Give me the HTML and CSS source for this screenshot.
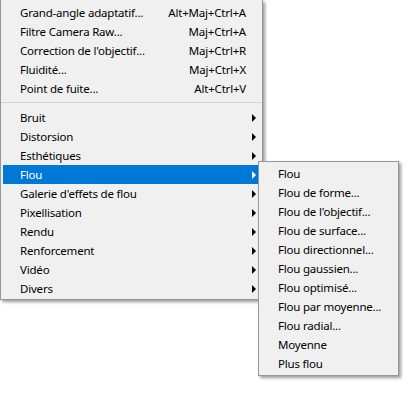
FILE: index.html
```html
<!DOCTYPE html>
<html lang="fr">
<head>
    <meta charset="UTF-8">
    <title>Filtre</title>
    <link rel="stylesheet" href="styles.css">
</head>
<body>
    <div class="screen">
        <div class="menu main-menu">
            <div class="item"><span class="label">Grand-angle adaptatif...</span><span class="key">Alt+Maj+Ctrl+A</span></div>
            <div class="item"><span class="label">Filtre Camera Raw...</span><span class="key">Maj+Ctrl+A</span></div>
            <div class="item"><span class="label">Correction de l'objectif...</span><span class="key">Maj+Ctrl+R</span></div>
            <div class="item"><span class="label">Fluidité...</span><span class="key">Maj+Ctrl+X</span></div>
            <div class="item"><span class="label">Point de fuite...</span><span class="key">Alt+Ctrl+V</span></div>
            <div class="sep"></div>
            <div class="item"><span class="label">Bruit</span><span class="arrow"></span></div>
            <div class="item"><span class="label">Distorsion</span><span class="arrow"></span></div>
            <div class="item"><span class="label">Esthétiques</span><span class="arrow"></span></div>
            <div class="item active"><span class="label">Flou</span><span class="arrow"></span></div>
            <div class="item"><span class="label">Galerie d'effets de flou</span><span class="arrow"></span></div>
            <div class="item"><span class="label">Pixellisation</span><span class="arrow"></span></div>
            <div class="item"><span class="label">Rendu</span><span class="arrow"></span></div>
            <div class="item"><span class="label">Renforcement</span><span class="arrow"></span></div>
            <div class="item"><span class="label">Vidéo</span><span class="arrow"></span></div>
            <div class="item"><span class="label">Divers</span><span class="arrow"></span></div>
        </div>

        <div class="menu sub-menu">
            <div class="item"><span class="label">Flou</span></div>
            <div class="item"><span class="label">Flou de forme...</span></div>
            <div class="item"><span class="label">Flou de l'objectif...</span></div>
            <div class="item"><span class="label">Flou de surface...</span></div>
            <div class="item"><span class="label">Flou directionnel...</span></div>
            <div class="item"><span class="label">Flou gaussien...</span></div>
            <div class="item"><span class="label">Flou optimisé...</span></div>
            <div class="item"><span class="label">Flou par moyenne...</span></div>
            <div class="item"><span class="label">Flou radial...</span></div>
            <div class="item"><span class="label">Moyenne</span></div>
            <div class="item"><span class="label">Plus flou</span></div>
        </div>
    </div>
</body>
</html>
```

FILE: styles.css
```css
body {
    margin: 0;
    padding: 0;
    background-color: #fff;
    font-family: 'Noto Sans', 'Open Sans', sans-serif;
    font-size: 11.5px;
    letter-spacing: -0.2px;
    color: #000;
}

.screen {
    position: relative;
    width: 418px;
    height: 393px;
}

.menu {
    background-color: #f0f0f0;
    border: 1px solid #979797;
    box-shadow: 2px 2px 3px rgba(0, 0, 0, 0.4);
    box-sizing: border-box;
}

.main-menu {
    width: 263px;
    border-top: none;
    padding: 3px 3px 1px 2px;
}

.sub-menu {
    position: absolute;
    left: 258px;
    top: 161px;
    width: 141px;
    padding: 2px;
}

.item {
    display: grid;
    grid-template-columns: 1fr auto 13px;
    align-items: center;
    height: 19px;
    padding-left: 17px;
    white-space: nowrap;
}

.item .key {
    grid-column: 2;
    text-align: right;
}

.item.active {
    background-color: #0078d7;
    color: #fff;
}

.arrow {
    grid-column: 3;
    justify-self: center;
    width: 0;
    height: 0;
    border-top: 4px solid transparent;
    border-bottom: 4px solid transparent;
    border-left: 4px solid #000;
    margin-left: 2px;
}

.item.active .arrow {
    border-left-color: #fff;
}

.sep {
    height: 1px;
    background-color: #d4d4d4;
    margin: 4px -3px 5px -2px;
}
```
